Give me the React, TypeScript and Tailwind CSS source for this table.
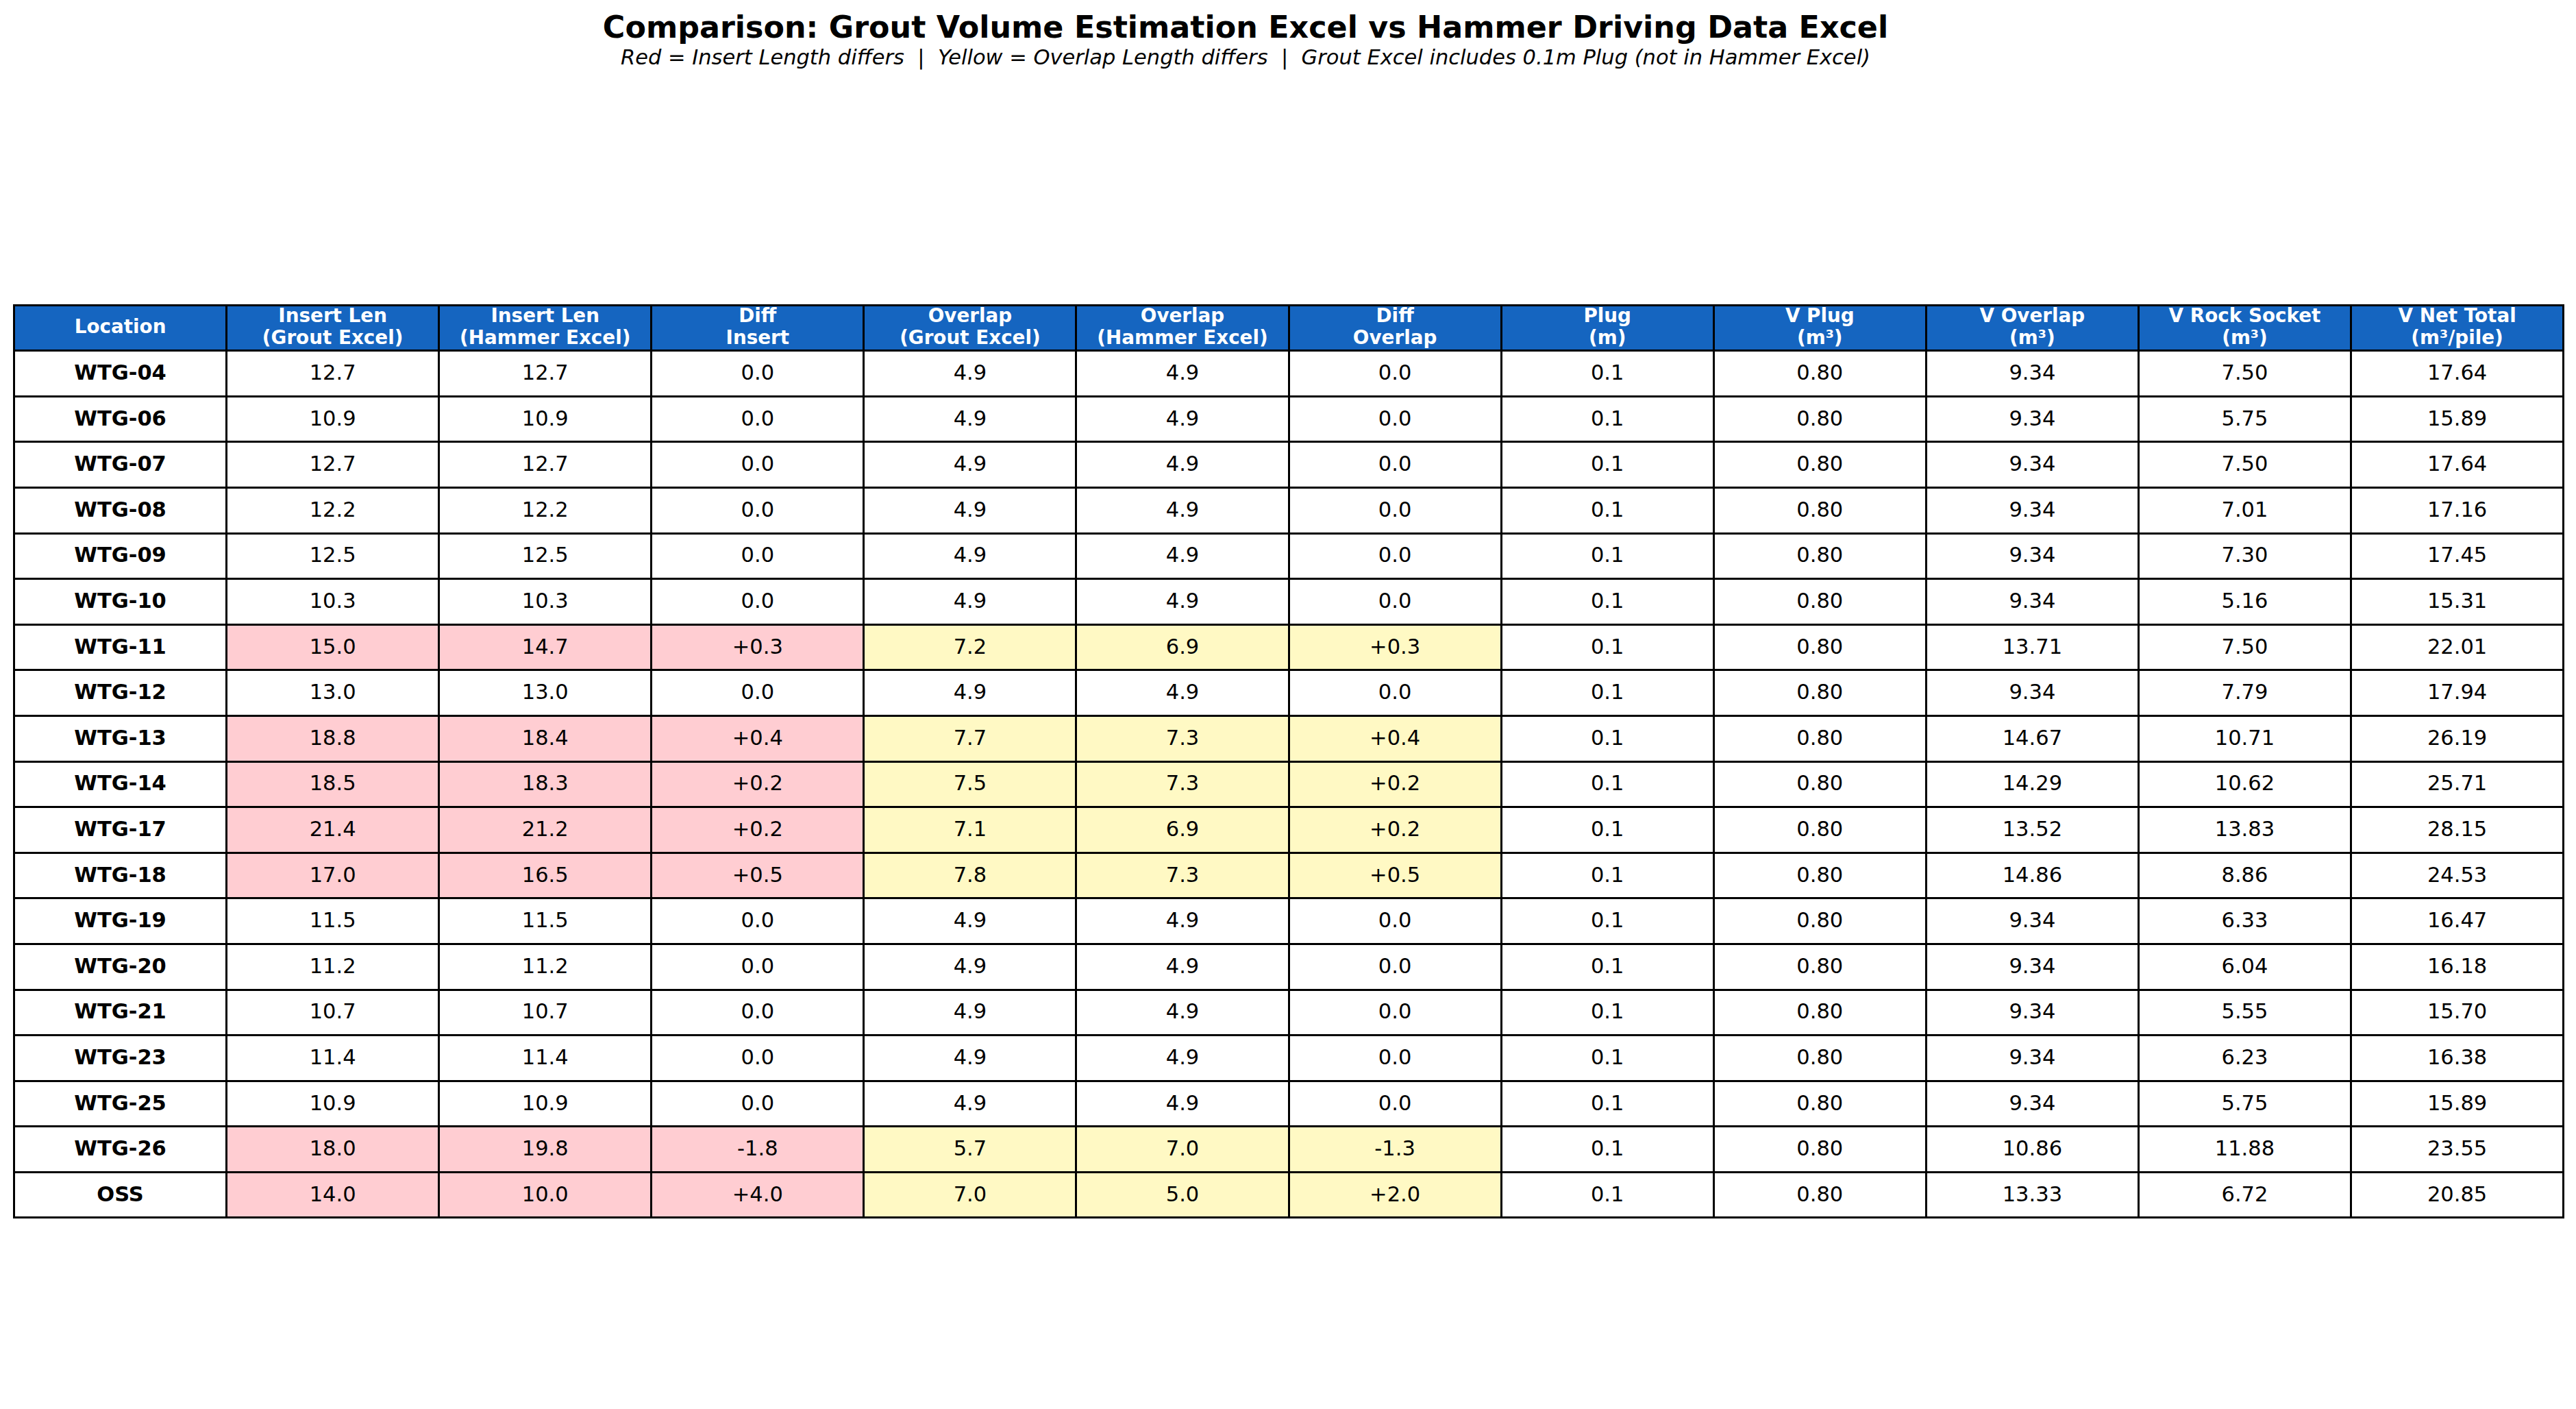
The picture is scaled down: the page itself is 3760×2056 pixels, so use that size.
const headers: string[][] = [
  ["Location"],
  ["Insert Len", "(Grout Excel)"],
  ["Insert Len", "(Hammer Excel)"],
  ["Diff", "Insert"],
  ["Overlap", "(Grout Excel)"],
  ["Overlap", "(Hammer Excel)"],
  ["Diff", "Overlap"],
  ["Plug", "(m)"],
  ["V Plug", "(m³)"],
  ["V Overlap", "(m³)"],
  ["V Rock Socket", "(m³)"],
  ["V Net Total", "(m³/pile)"],
];

// [location, insGrout, insHammer, diffIns, ovGrout, ovHammer, diffOv, plug, vPlug, vOverlap, vRock, vNet]
const rows: string[][] = [
  ["WTG-04", "12.7", "12.7", "0.0", "4.9", "4.9", "0.0", "0.1", "0.80", "9.34", "7.50", "17.64"],
  ["WTG-06", "10.9", "10.9", "0.0", "4.9", "4.9", "0.0", "0.1", "0.80", "9.34", "5.75", "15.89"],
  ["WTG-07", "12.7", "12.7", "0.0", "4.9", "4.9", "0.0", "0.1", "0.80", "9.34", "7.50", "17.64"],
  ["WTG-08", "12.2", "12.2", "0.0", "4.9", "4.9", "0.0", "0.1", "0.80", "9.34", "7.01", "17.16"],
  ["WTG-09", "12.5", "12.5", "0.0", "4.9", "4.9", "0.0", "0.1", "0.80", "9.34", "7.30", "17.45"],
  ["WTG-10", "10.3", "10.3", "0.0", "4.9", "4.9", "0.0", "0.1", "0.80", "9.34", "5.16", "15.31"],
  ["WTG-11", "15.0", "14.7", "+0.3", "7.2", "6.9", "+0.3", "0.1", "0.80", "13.71", "7.50", "22.01"],
  ["WTG-12", "13.0", "13.0", "0.0", "4.9", "4.9", "0.0", "0.1", "0.80", "9.34", "7.79", "17.94"],
  ["WTG-13", "18.8", "18.4", "+0.4", "7.7", "7.3", "+0.4", "0.1", "0.80", "14.67", "10.71", "26.19"],
  ["WTG-14", "18.5", "18.3", "+0.2", "7.5", "7.3", "+0.2", "0.1", "0.80", "14.29", "10.62", "25.71"],
  ["WTG-17", "21.4", "21.2", "+0.2", "7.1", "6.9", "+0.2", "0.1", "0.80", "13.52", "13.83", "28.15"],
  ["WTG-18", "17.0", "16.5", "+0.5", "7.8", "7.3", "+0.5", "0.1", "0.80", "14.86", "8.86", "24.53"],
  ["WTG-19", "11.5", "11.5", "0.0", "4.9", "4.9", "0.0", "0.1", "0.80", "9.34", "6.33", "16.47"],
  ["WTG-20", "11.2", "11.2", "0.0", "4.9", "4.9", "0.0", "0.1", "0.80", "9.34", "6.04", "16.18"],
  ["WTG-21", "10.7", "10.7", "0.0", "4.9", "4.9", "0.0", "0.1", "0.80", "9.34", "5.55", "15.70"],
  ["WTG-23", "11.4", "11.4", "0.0", "4.9", "4.9", "0.0", "0.1", "0.80", "9.34", "6.23", "16.38"],
  ["WTG-25", "10.9", "10.9", "0.0", "4.9", "4.9", "0.0", "0.1", "0.80", "9.34", "5.75", "15.89"],
  ["WTG-26", "18.0", "19.8", "-1.8", "5.7", "7.0", "-1.3", "0.1", "0.80", "10.86", "11.88", "23.55"],
  ["OSS", "14.0", "10.0", "+4.0", "7.0", "5.0", "+2.0", "0.1", "0.80", "13.33", "6.72", "20.85"],
];

function cellBg(row: string[], col: number) {
  const insDiff = row[1] !== row[2];
  const ovDiff = row[4] !== row[5];
  if (col >= 1 && col <= 3 && insDiff) return "bg-[#ffcdd2]";
  if (col >= 4 && col <= 6 && ovDiff) return "bg-[#fff9c4]";
  return "bg-white";
}

function HeaderCell({ lines }: { lines: string[] }) {
  return (
    <div className="flex flex-col items-center justify-center h-[66.6px] pb-[2px] bg-[#1565c0] border-r-[3px] border-b-[3px] border-black text-white font-bold text-[27.8px] leading-[32px]">
      {lines.map((l) => (
        <span key={l}>{l}</span>
      ))}
    </div>
  );
}

function DataRow({ row }: { row: string[] }) {
  return (
    <>
      {row.map((v, i) => (
        <div
          key={i}
          className={`flex items-center justify-center h-[66.6px] pb-[2px] border-r-[3px] border-b-[3px] border-black text-[30.5px] text-black ${cellBg(row, i)} ${i === 0 ? "font-bold" : "font-normal"}`}
        >
          {v}
        </div>
      ))}
    </>
  );
}

export default function App() {
  return (
    <div className="w-[3760px] h-[2056px] bg-white font-['DejaVu_Sans',sans-serif] overflow-hidden">
      <div className="flex flex-col items-center pt-[13px] pr-[124px]">
        <h1 className="text-[44.4px] leading-[53px] font-bold text-black">
          Comparison: Grout Volume Estimation Excel vs Hammer Driving Data Excel
        </h1>
        <p className="text-[30.5px] leading-[36.6px] italic text-black whitespace-pre">
          {"Red = Insert Length differs  |  Yellow = Overlap Length differs  |  Grout Excel includes 0.1m Plug (not in Hammer Excel)"}
        </p>
      </div>
      <div className="ml-[19px] mt-[341px] w-fit grid grid-cols-[repeat(12,310.1px)] border-l-[3px] border-t-[3px] border-black">
        {headers.map((h, i) => (
          <HeaderCell key={i} lines={h} />
        ))}
        {rows.map((r) => (
          <DataRow key={r[0]} row={r} />
        ))}
      </div>
    </div>
  );
}
